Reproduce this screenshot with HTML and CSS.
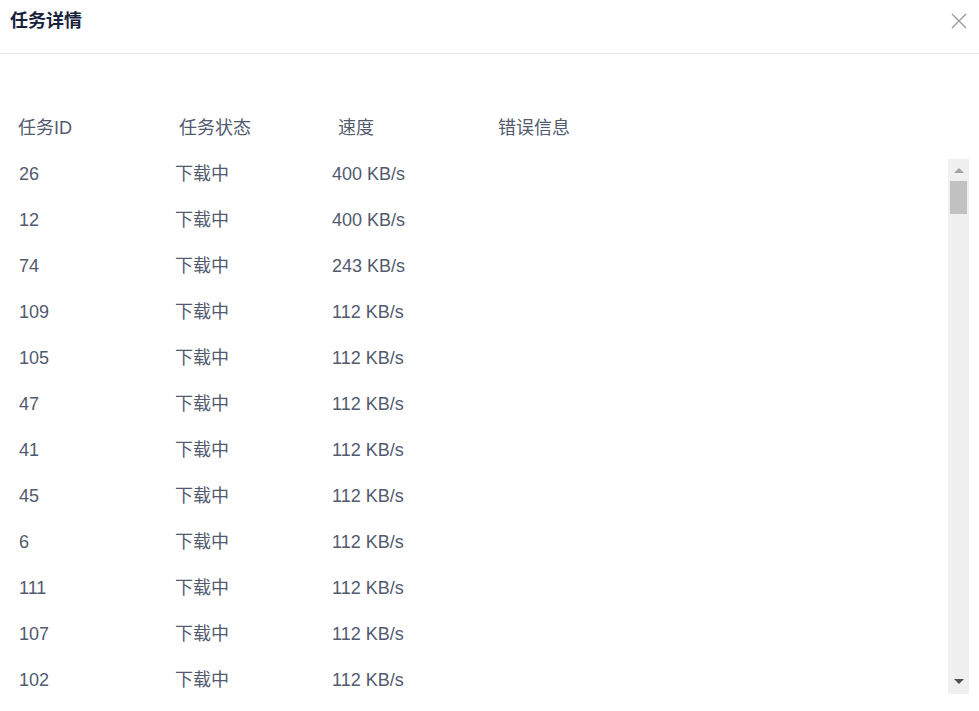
FILE: index.html
```html
<!DOCTYPE html>
<html lang="zh-CN">
<head>
  <meta charset="UTF-8" />
  <meta name="viewport" content="width=device-width, initial-scale=1.0" />
  <link rel="stylesheet" href="styles.css">
</head>
<body>
  <div class="modal">
    <div class="modal-header">
      <div class="modal-title">任务详情</div>
      <a class="modal-close">
        <svg width="16" height="16" viewBox="0 0 16 16">
          <path d="M1 1 L15 15 M15 1 L1 15" stroke="#999" stroke-width="1.3" fill="none" />
        </svg>
      </a>
    </div>

    <div class="modal-body">
      <div class="table-head">
        <div class="th">任务ID</div>
        <div class="th">任务状态</div>
        <div class="th">速度</div>
        <div class="th">错误信息</div>
      </div>

      <div class="table-wrap">
        <div class="table-body">
          <div class="tr"><div class="td">26</div><div class="td">下载中</div><div class="td">400 KB/s</div><div class="td"></div></div>
          <div class="tr"><div class="td">12</div><div class="td">下载中</div><div class="td">400 KB/s</div><div class="td"></div></div>
          <div class="tr"><div class="td">74</div><div class="td">下载中</div><div class="td">243 KB/s</div><div class="td"></div></div>
          <div class="tr"><div class="td">109</div><div class="td">下载中</div><div class="td">112 KB/s</div><div class="td"></div></div>
          <div class="tr"><div class="td">105</div><div class="td">下载中</div><div class="td">112 KB/s</div><div class="td"></div></div>
          <div class="tr"><div class="td">47</div><div class="td">下载中</div><div class="td">112 KB/s</div><div class="td"></div></div>
          <div class="tr"><div class="td">41</div><div class="td">下载中</div><div class="td">112 KB/s</div><div class="td"></div></div>
          <div class="tr"><div class="td">45</div><div class="td">下载中</div><div class="td">112 KB/s</div><div class="td"></div></div>
          <div class="tr"><div class="td">6</div><div class="td">下载中</div><div class="td">112 KB/s</div><div class="td"></div></div>
          <div class="tr"><div class="td">111</div><div class="td">下载中</div><div class="td">112 KB/s</div><div class="td"></div></div>
          <div class="tr"><div class="td">107</div><div class="td">下载中</div><div class="td">112 KB/s</div><div class="td"></div></div>
          <div class="tr"><div class="td">102</div><div class="td">下载中</div><div class="td">112 KB/s</div><div class="td"></div></div>
        </div>

        <!-- fake scrollbar -->
        <div class="scrollbar">
          <div class="sb-arrow sb-up"></div>
          <div class="sb-track">
            <div class="sb-thumb"></div>
          </div>
          <div class="sb-arrow sb-down"></div>
        </div>
      </div>
    </div>
  </div>
</body>
</html>
```

FILE: styles.css
```css
html, body {
  margin: 0;
  padding: 0;
  background: #fff;
}
body {
  font-family: 'Liberation Sans', 'Noto Sans CJK SC', sans-serif;
  color: #515a6e;
  font-size: 18px;
  width: 979px;
  height: 711px;
  overflow: hidden;
}

.modal-header {
  height: 54px;
  border-bottom: 1px solid #e8eaec;
  display: flex;
  justify-content: space-between;
  padding: 0 12px 0 10px;
  box-sizing: border-box;
}
.modal-title {
  font-size: 18px;
  font-weight: 700;
  color: #17233d;
  line-height: 22px;
  padding-top: 10px;
}
.modal-close {
  padding-top: 13px;
  cursor: pointer;
}

.modal-body {
  padding: 59px 10px 0 18px;
}

.table-head {
  display: grid;
  grid-template-columns: 161px 159px 160px 1fr;
  height: 46px;
  line-height: 30px;
}

.table-wrap {
  display: flex;
  height: 535px;
}
.table-body {
  flex: 1;
  overflow: hidden;
  padding-left: 1px;
}
.tr {
  display: grid;
  grid-template-columns: 156px 157px 160px 1fr;
  height: 46px;
  line-height: 30px;
}

.scrollbar {
  width: 21px;
  background: #f0f0f0;
  display: flex;
  flex-direction: column;
  align-items: center;
}
.sb-arrow {
  width: 0;
  height: 0;
  border-left: 5px solid transparent;
  border-right: 5px solid transparent;
}
.sb-up {
  border-bottom: 5px solid #a3a3a3;
  margin: 9px 0 8px;
}
.sb-down {
  border-top: 5px solid #505050;
  margin: 0 0 10px;
}
.sb-track {
  flex: 1;
  width: 17px;
}
.sb-thumb {
  height: 33px;
  background: #c1c1c1;
}
```
